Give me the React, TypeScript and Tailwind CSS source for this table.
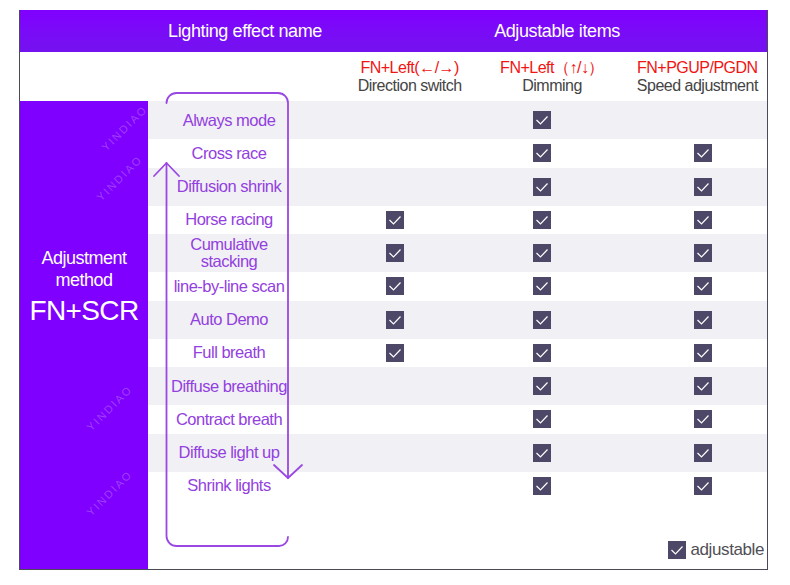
const ROWS: { name: string[]; marks: [boolean, boolean, boolean] }[] = [
  { name: ['Always mode'], marks: [false, true, false] },
  { name: ['Cross race'], marks: [false, true, true] },
  { name: ['Diffusion shrink'], marks: [false, true, true] },
  { name: ['Horse racing'], marks: [true, true, true] },
  { name: ['Cumulative', 'stacking'], marks: [true, true, true] },
  { name: ['line-by-line scan'], marks: [true, true, true] },
  { name: ['Auto Demo'], marks: [true, true, true] },
  { name: ['Full breath'], marks: [true, true, true] },
  { name: ['Diffuse breathing'], marks: [false, true, true] },
  { name: ['Contract breath'], marks: [false, true, true] },
  { name: ['Diffuse light up'], marks: [false, true, true] },
  { name: ['Shrink lights'], marks: [false, true, true] },
]

const WATERMARKS = [
  'left-[95px] top-[120px]',
  'left-[90px] top-[170px]',
  'left-[80px] top-[400px]',
  'left-[80px] top-[485px]',
]

function Check() {
  return (
    <span className="inline-flex w-[18px] h-[18px] bg-[#4d4868] shrink-0">
      <svg width="18" height="18" viewBox="0 0 18 18">
        <polyline points="3.5,9 7.5,13 14.5,5.5" fill="none" stroke="#ffffff" strokeWidth="1.2" />
      </svg>
    </span>
  )
}

export default function App() {
  return (
    <div
      className="relative w-[790px] h-[585px] bg-white pt-[10px] pl-[19px] overflow-hidden"
      style={{ fontFamily: '"Liberation Sans", Arial, sans-serif' }}
    >
      <div className="w-[749px] h-[560px] flex flex-col border-l border-r border-b border-[#4a4a58]">
        {/* Header */}
        <div className="h-[42px] shrink-0 flex items-center bg-gradient-to-b from-[#8000ff] to-[#7412ef] text-white text-[18px] tracking-[-0.4px]">
          <span className="ml-[125px] w-[200px] text-center">Lighting effect name</span>
          <span className="ml-[112px] w-[200px] text-center">Adjustable items</span>
        </div>

        {/* Sub header */}
        <div className="h-[49px] shrink-0 flex items-center text-[16px] leading-[18px] tracking-[-0.5px]">
          <div className="ml-[325px] w-[130px] text-center">
            <p className="text-[#f01414]">FN+Left(←/→)</p>
            <p className="text-[#444444]">Direction switch</p>
          </div>
          <div className="ml-[13px] w-[130px] text-center">
            <p className="text-[#f01414]">FN+Left（↑/↓）</p>
            <p className="text-[#444444]">Dimming</p>
          </div>
          <div className="ml-[11px] w-[140px] text-center">
            <p className="text-[#f01414]">FN+PGUP/PGDN</p>
            <p className="text-[#444444]">Speed adjustment</p>
          </div>
        </div>

        {/* Body */}
        <div className="flex-1 flex">
          <div className="w-[128px] shrink-0 bg-[#8000ff] text-white text-center pt-[146px]">
            <p className="text-[18px] leading-[22px] tracking-[-0.5px]">Adjustment</p>
            <p className="text-[18px] leading-[22px] tracking-[-0.5px]">method</p>
            <p className="text-[28px] leading-[34px] tracking-[-0.6px] mt-[3px]">FN+SCR</p>
          </div>

          <div className="flex-1 flex flex-col">
            {ROWS.map((row, i) => (
              <div
                key={i}
                className={
                  i % 2 === 0
                    ? 'h-[38px] shrink-0 grid grid-cols-[162px_170px_124px_1fr] items-center bg-[#f1f0f5]'
                    : 'h-[28.5px] shrink-0 grid grid-cols-[162px_170px_124px_1fr] items-center bg-white'
                }
              >
                <div className="text-center text-[16.5px] leading-[17px] tracking-[-0.5px] text-[#9340e0]">
                  {row.name.map(l => (
                    <p key={l}>{l}</p>
                  ))}
                </div>
                <div className="flex justify-center">{row.marks[0] && <Check />}</div>
                <div className="flex justify-center">{row.marks[1] && <Check />}</div>
                <div className="flex justify-center pl-[34px]">{row.marks[2] && <Check />}</div>
              </div>
            ))}
            <div className="flex-1 flex items-end justify-end pr-[3px] pb-[9px]">
              <div className="flex items-center gap-[4px]">
                <Check />
                <span className="text-[17px] leading-[20px] tracking-[-0.4px] text-[#4f4f55]">adjustable</span>
              </div>
            </div>
          </div>
        </div>
      </div>

      {/* bracket with arrows */}
      <svg className="absolute left-0 top-0 pointer-events-none" width="790" height="585" viewBox="0 0 790 585">
        <g fill="none" stroke="#9a48e2" strokeWidth="1.8" strokeLinecap="round" strokeLinejoin="round">
          <path d="M166.5 103 A10 10 0 0 1 176.5 93 H278 A10 10 0 0 1 288 103 V478" />
          <path d="M274 465 L288 478 L302 465" />
          <path d="M288 537 A9 9 0 0 1 279 546 H176.5 A10 10 0 0 1 166.5 536 V163" />
          <path d="M154 176 L166.5 163 L179 176" />
        </g>
      </svg>

      {/* watermark */}
      {WATERMARKS.map(pos => (
        <span
          key={pos}
          className={`absolute ${pos} -rotate-45 text-[11px] tracking-[2px] text-white/25 pointer-events-none`}
        >
          YINDIAO
        </span>
      ))}
    </div>
  )
}
